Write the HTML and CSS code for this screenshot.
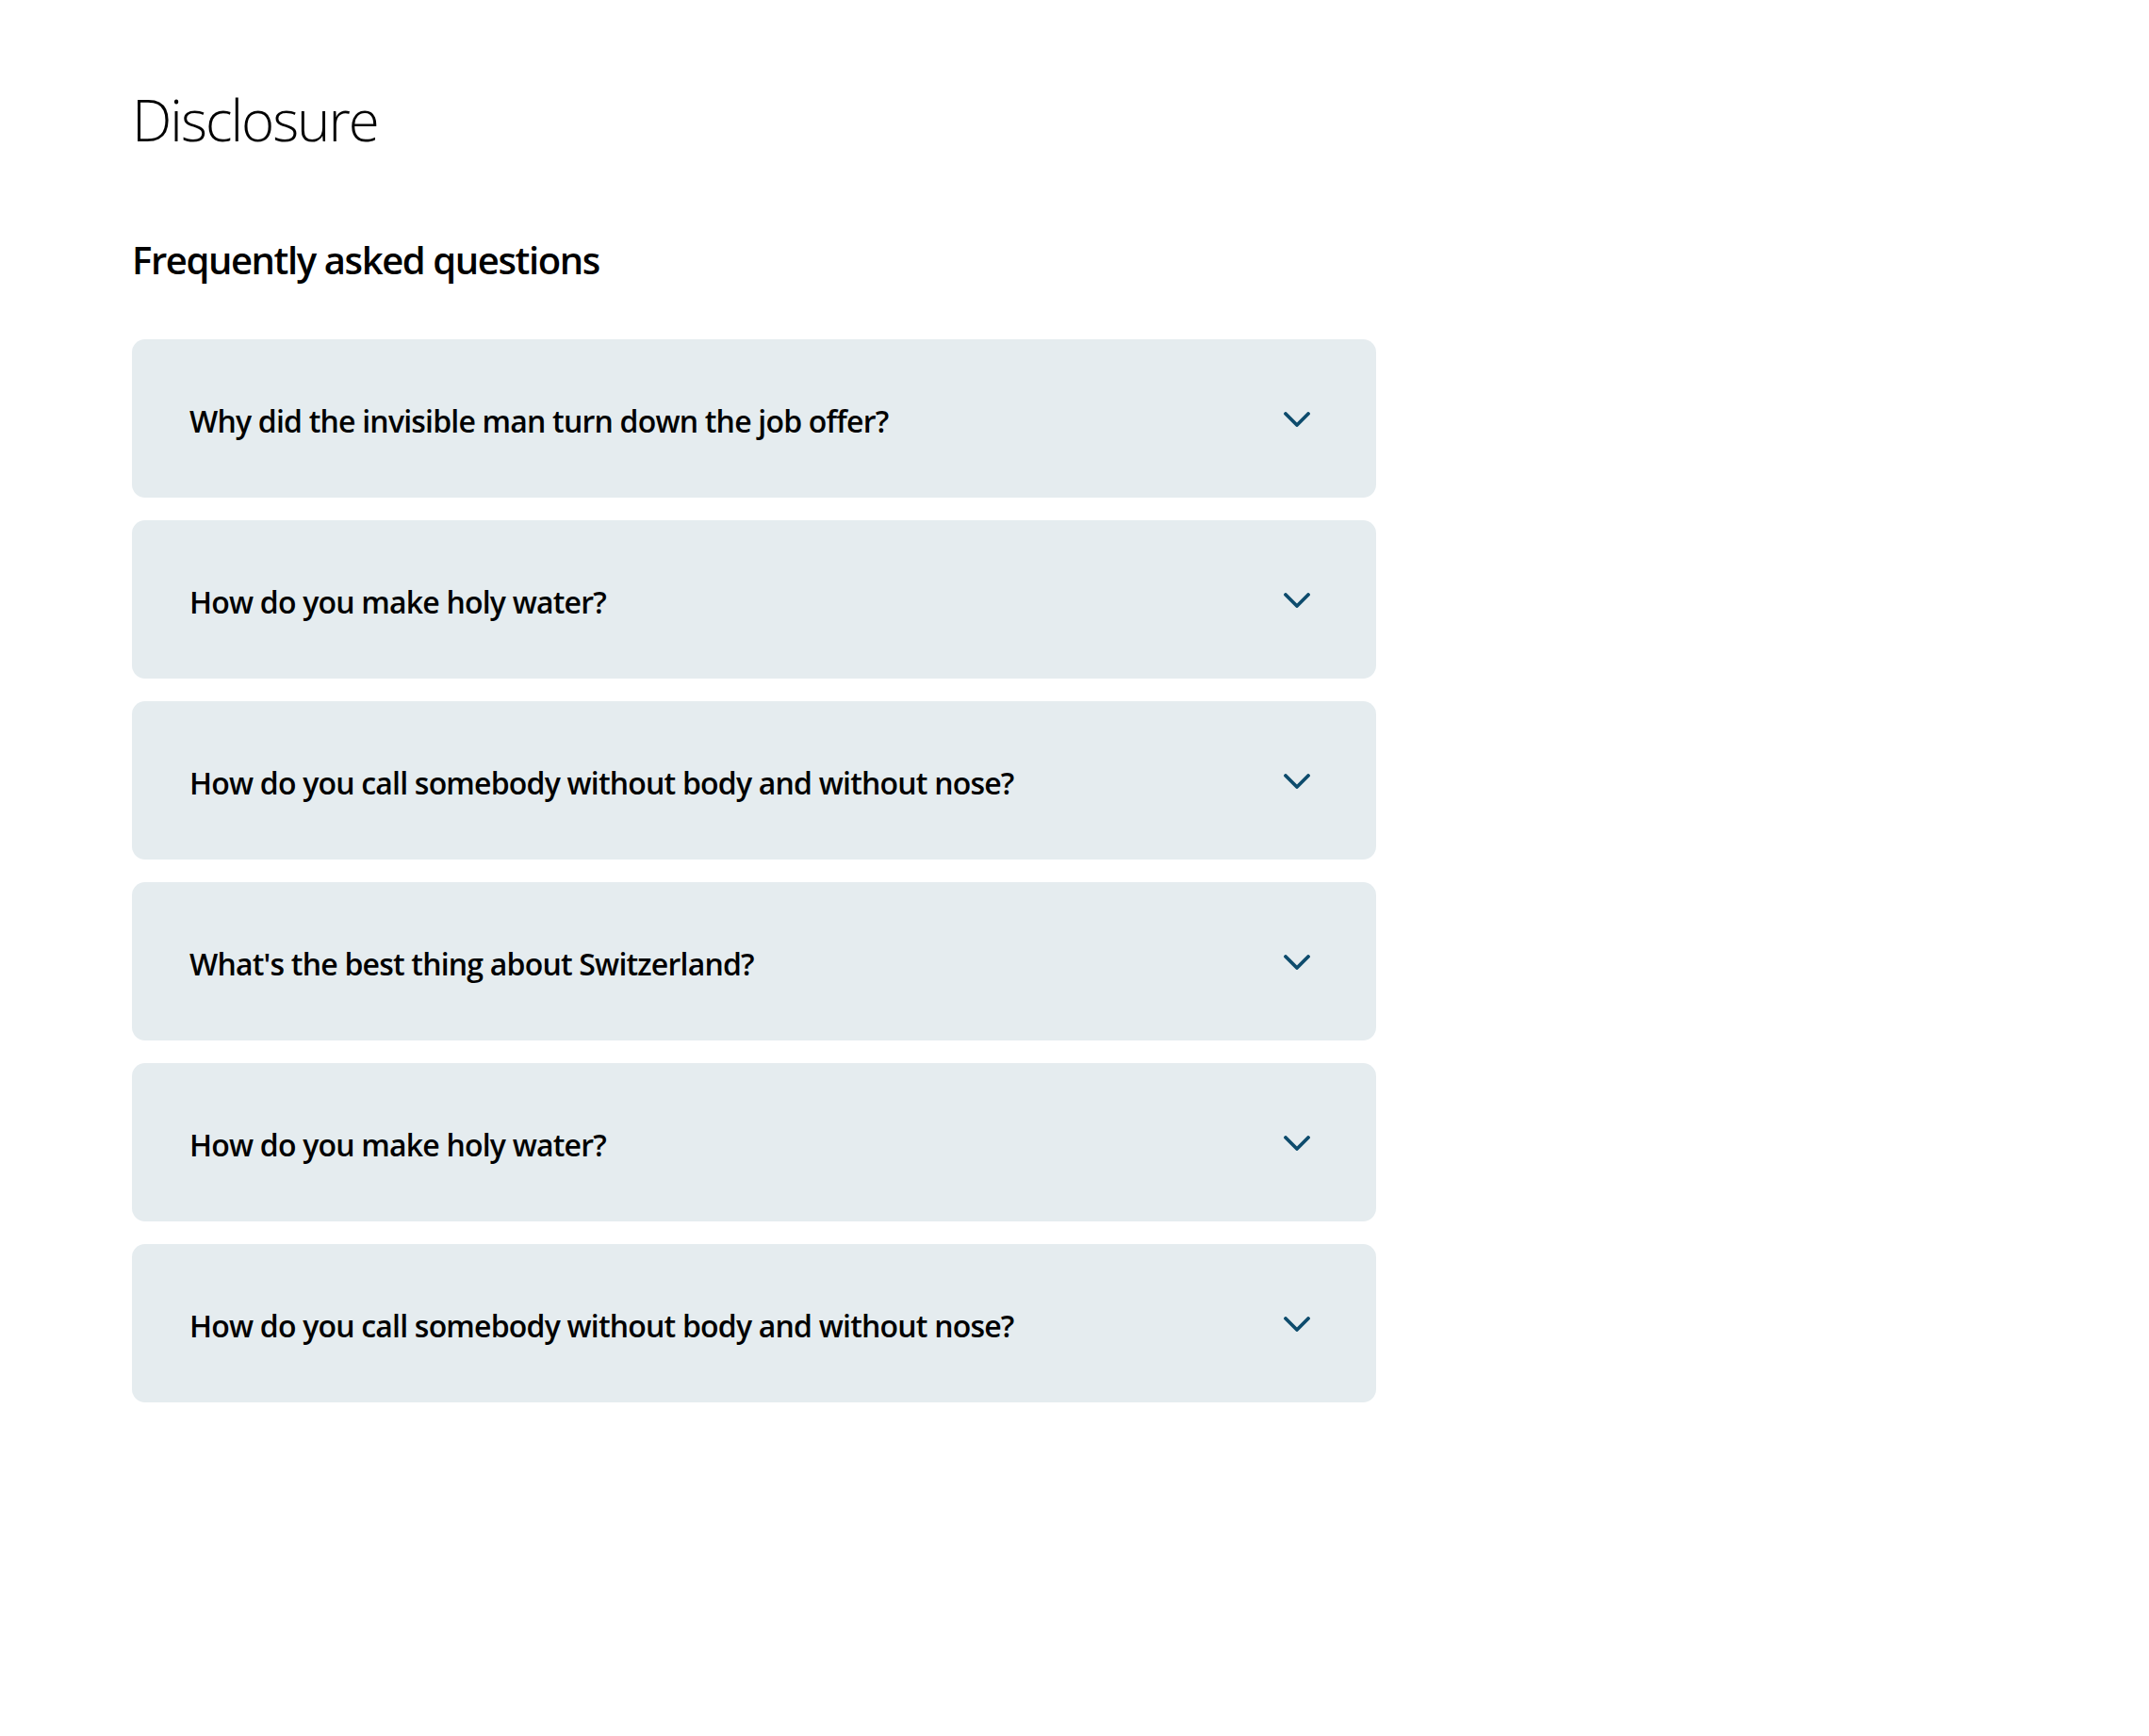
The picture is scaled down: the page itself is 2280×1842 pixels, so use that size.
FILE: index.html
```html
<!DOCTYPE html>
<html lang="en">
<head>
<meta charset="utf-8">
<title>Disclosure</title>
<link rel="stylesheet" href="styles.css">
</head>
<body>
<main class="page">
  <h1 class="title">Disclosure</h1>
  <h2 class="subtitle">Frequently asked questions</h2>
  <div class="faq">
    <div class="item"><span class="q">Why did the invisible man turn down the job offer?</span><svg class="chev" viewBox="0 0 28 16"><path d="M2 2 L14 14 L26 2"/></svg></div>
    <div class="item"><span class="q">How do you make holy water?</span><svg class="chev" viewBox="0 0 28 16"><path d="M2 2 L14 14 L26 2"/></svg></div>
    <div class="item"><span class="q">How do you call somebody without body and without nose?</span><svg class="chev" viewBox="0 0 28 16"><path d="M2 2 L14 14 L26 2"/></svg></div>
    <div class="item"><span class="q">What's the best thing about Switzerland?</span><svg class="chev" viewBox="0 0 28 16"><path d="M2 2 L14 14 L26 2"/></svg></div>
    <div class="item"><span class="q">How do you make holy water?</span><svg class="chev" viewBox="0 0 28 16"><path d="M2 2 L14 14 L26 2"/></svg></div>
    <div class="item"><span class="q">How do you call somebody without body and without nose?</span><svg class="chev" viewBox="0 0 28 16"><path d="M2 2 L14 14 L26 2"/></svg></div>
  </div>
</main>
</body>
</html>
```
FILE: styles.css
```css
html, body {
  margin: 0;
  padding: 0;
  background: #ffffff;
}
body {
  font-family: "Open Sans", "Noto Sans", sans-serif;
  color: #000;
}
.page {
  padding: 91px 0 0 140px;
  width: 1320px;
}
.title {
  margin: 0;
  font-size: 60px;
  font-weight: 300;
  line-height: 72px;
  letter-spacing: -2px;
}
.subtitle {
  margin: 89px 0 0 0;
  font-size: 40px;
  font-weight: 600;
  line-height: 48px;
  letter-spacing: -1.4px;
}
.faq {
  margin-top: 60px;
  display: flex;
  flex-direction: column;
  gap: 24px;
}
.item {
  height: 168px;
  box-sizing: border-box;
  background: #e5ecef;
  border-radius: 14px;
  display: flex;
  align-items: center;
  justify-content: space-between;
  padding: 0 70px 0 61px;
}
.q {
  font-size: 32px;
  font-weight: 600;
  line-height: 40px;
  letter-spacing: -0.8px;
  padding-top: 5px;
}
.chev {
  width: 28px;
  height: 16px;
  margin-top: 2px;
  fill: none;
  stroke: #0e4c6d;
  stroke-width: 3.8;
  stroke-linecap: round;
  stroke-linejoin: round;
}
```
